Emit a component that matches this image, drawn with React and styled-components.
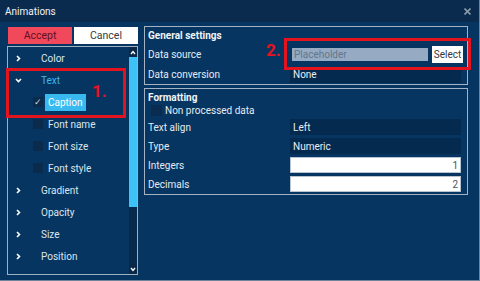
import React from "react";
import styled, { createGlobalStyle } from "styled-components";

const Global = createGlobalStyle`
  html, body { margin: 0; padding: 0; background: #073561; }
  body { font-family: Roboto, "Liberation Sans", sans-serif; }
`;

const Window = styled.div`
  position: relative;
  width: 480px;
  height: 281px;
  box-sizing: border-box;
  overflow: hidden;
  display: flex;
  flex-direction: column;
  background: #073561;
  border-right: 1px solid #6d849b;
  border-bottom: 1px solid #6d849b;
  font-size: 10px;
  color: #e4ebf2;
`;

const TitleBar = styled.div`
  flex: none;
  height: 22px;
  display: flex;
  align-items: center;
  justify-content: space-between;
  padding: 0 8px 0 5px;
  background: #0b2b4e;
  color: #eef2f6;
`;

const Body = styled.div`
  flex: 1;
  display: flex;
  gap: 6px;
  padding: 4px 0 0 7px;
`;

const LeftCol = styled.div`
  width: 131px;
  display: flex;
  flex-direction: column;
  padding-top: 1px;
`;

const ButtonRow = styled.div`
  display: flex;
  gap: 2px;
  height: 17px;
  padding-left: 1px;
`;

const Button = styled.div`
  flex: 1;
  display: flex;
  align-items: center;
  justify-content: center;
  background: ${(p) => (p.$primary ? "#f2485c" : "#ffffff")};
  color: ${(p) => (p.$primary ? "#5e1222" : "#333a42")};
  font-size: 10.5px;
`;

const List = styled.div`
  margin-top: 2px;
  height: 229px;
  box-sizing: border-box;
  border: 1px solid #9fb0c2;
  display: flex;
`;

const Rows = styled.div`
  flex: 1;
  overflow: hidden;
`;

const Row = styled.div`
  height: 22px;
  display: flex;
  align-items: center;
  padding-left: 7px;
  color: ${(p) => (p.$open ? "#3eb6ee" : "#dbe5ee")};
`;

const ChevronCell = styled.div`
  width: 26px;
  display: flex;
  align-items: center;
`;

const SubRow = styled.div`
  height: 22px;
  display: flex;
  align-items: center;
  padding-left: 25px;
`;

const Check = styled.div`
  width: 10px;
  height: 10px;
  margin-right: 2px;
  background: #0a2b4c;
  color: #c9d4de;
  font-size: 9px;
  line-height: 10px;
  text-align: center;
`;

const SubLabel = styled.div`
  height: 17px;
  line-height: 17px;
  padding: 0 3px;
  background: ${(p) => (p.$selected ? "#38baf0" : "transparent")};
  color: ${(p) => (p.$selected ? "#ffffff" : "#dbe5ee")};
`;

const Scrollbar = styled.div`
  width: 8px;
  display: flex;
  flex-direction: column;
  background: #06294c;
`;

const ScrollArrow = styled.div`
  height: 10px;
  display: flex;
  align-items: center;
  justify-content: center;
  background: #0a2746;
`;

const Thumb = styled.div`
  height: 150px;
  background: #3ec2f6;
`;

const Track = styled.div`
  flex: 1;
`;

const RightCol = styled.div`
  width: 324px;
  display: flex;
  flex-direction: column;
  gap: 3px;
`;

const Group = styled.div`
  border: 1px solid #a3b3c4;
  padding: 3px 6px ${(p) => p.$bottom}px 3px;
  display: grid;
  grid-template-columns: 142px 1fr;
  row-gap: ${(p) => p.$gap}px;
  align-items: center;
`;

const GroupTitle = styled.div`
  grid-column: 1 / 3;
  font-weight: 700;
  line-height: ${(p) => p.$lh}px;
  color: #f0f4f8;
`;

const Label = styled.div`
  height: ${(p) => p.$h}px;
  display: flex;
  align-items: center;
`;

const DarkField = styled.div`
  height: 16px;
  display: flex;
  align-items: center;
  padding-left: 3px;
  background: #052a4f;
  color: #e8eef4;
`;

const WhiteField = styled.div`
  height: 16px;
  box-sizing: border-box;
  display: flex;
  align-items: center;
  justify-content: flex-end;
  padding-right: 2px;
  background: #ffffff;
  border: 1px solid #b6c3d1;
  color: #4a525a;
`;

const SourceCell = styled.div`
  display: flex;
  align-items: center;
  gap: 4px;
  margin-left: 2px;
  margin-right: -2px;
`;

const Placeholder = styled.div`
  flex: 1;
  height: 13px;
  display: flex;
  align-items: center;
  padding-left: 2px;
  background: #96abc3;
  color: #62768b;
`;

const SelectButton = styled.div`
  width: 31px;
  height: 17px;
  display: flex;
  align-items: center;
  justify-content: center;
  background: #ffffff;
  color: #333a42;
`;

const CheckRow = styled.div`
  grid-column: 1 / 3;
  height: 12px;
  display: flex;
  align-items: center;
  gap: 3px;
  padding-left: 3px;
  margin-top: -2px;
`;

const Box = styled.div`
  width: 11px;
  height: 11px;
  background: #0a2c50;
`;

const Marker = styled.div`
  position: absolute;
  left: ${(p) => p.$x}px;
  top: ${(p) => p.$y}px;
  width: ${(p) => p.$w}px;
  height: ${(p) => p.$h}px;
  box-sizing: border-box;
  border: 3px solid #e3141e;
`;

const MarkerNum = styled.div`
  position: absolute;
  left: ${(p) => p.$x}px;
  top: ${(p) => p.$y}px;
  font-size: 17px;
  line-height: 17px;
  font-weight: 700;
  color: #e3141e;
`;

const Chevron = ({ down }) => (
  <svg width="7" height="7" viewBox="0 0 7 7">
    <path
      d={down ? "M1 2 L3.5 4.5 L6 2" : "M2 1 L4.5 3.5 L2 6"}
      fill="none"
      stroke="#ffffff"
      strokeWidth="1.6"
    />
  </svg>
);

const SmallArrow = ({ up }) => (
  <svg width="6" height="5" viewBox="0 0 6 5">
    <path
      d={up ? "M1 4 L3 1.5 L5 4" : "M1 1 L3 3.5 L5 1"}
      fill="none"
      stroke="#ffffff"
      strokeWidth="1.3"
    />
  </svg>
);

const Close = () => (
  <svg width="7" height="7" viewBox="0 0 7 7">
    <path d="M0.5 0.5 L6.5 6.5 M6.5 0.5 L0.5 6.5" stroke="#8898a9" strokeWidth="1.6" />
  </svg>
);

const items = ["Gradient", "Opacity", "Size", "Position", "Rotation"];
const subs = ["Font name", "Font size", "Font style"];

export default function App() {
  return (
    <Window>
      <Global />
      <TitleBar>
        <span>Animations</span>
        <Close />
      </TitleBar>
      <Body>
        <LeftCol>
          <ButtonRow>
            <Button $primary>Accept</Button>
            <Button>Cancel</Button>
          </ButtonRow>
          <List>
            <Rows>
              <Row>
                <ChevronCell><Chevron /></ChevronCell>
                Color
              </Row>
              <Row $open>
                <ChevronCell><Chevron down /></ChevronCell>
                Text
              </Row>
              <SubRow>
                <Check>✓</Check>
                <SubLabel $selected>Caption</SubLabel>
              </SubRow>
              {subs.map((s) => (
                <SubRow key={s}>
                  <Check />
                  <SubLabel>{s}</SubLabel>
                </SubRow>
              ))}
              {items.map((s) => (
                <Row key={s}>
                  <ChevronCell><Chevron /></ChevronCell>
                  {s}
                </Row>
              ))}
            </Rows>
            <Scrollbar>
              <ScrollArrow><SmallArrow up /></ScrollArrow>
              <Thumb />
              <Track />
              <ScrollArrow><SmallArrow /></ScrollArrow>
            </Scrollbar>
          </List>
        </LeftCol>
        <RightCol>
          <Group $gap={2} $bottom={1}>
            <GroupTitle $lh={12}>General settings</GroupTitle>
            <Label $h={20}>Data source</Label>
            <SourceCell>
              <Placeholder>Placeholder</Placeholder>
              <SelectButton>Select</SelectButton>
            </SourceCell>
            <Label $h={17}>Data conversion</Label>
            <DarkField>None</DarkField>
          </Group>
          <Group $gap={3} $bottom={2}>
            <GroupTitle $lh={11}>Formatting</GroupTitle>
            <CheckRow>
              <Box />
              Non processed data
            </CheckRow>
            <Label $h={16}>Text align</Label>
            <DarkField>Left</DarkField>
            <Label $h={16}>Type</Label>
            <DarkField>Numeric</DarkField>
            <Label $h={16}>Integers</Label>
            <WhiteField>1</WhiteField>
            <Label $h={16}>Decimals</Label>
            <WhiteField>2</WhiteField>
          </Group>
        </RightCol>
      </Body>
      <Marker $x={6} $y={68} $w={120} $h={50} />
      <MarkerNum $x={92} $y={83}>1.</MarkerNum>
      <Marker $x={284} $y={38} $w={187} $h={32} />
      <MarkerNum $x={266} $y={42}>2.</MarkerNum>
    </Window>
  );
}
